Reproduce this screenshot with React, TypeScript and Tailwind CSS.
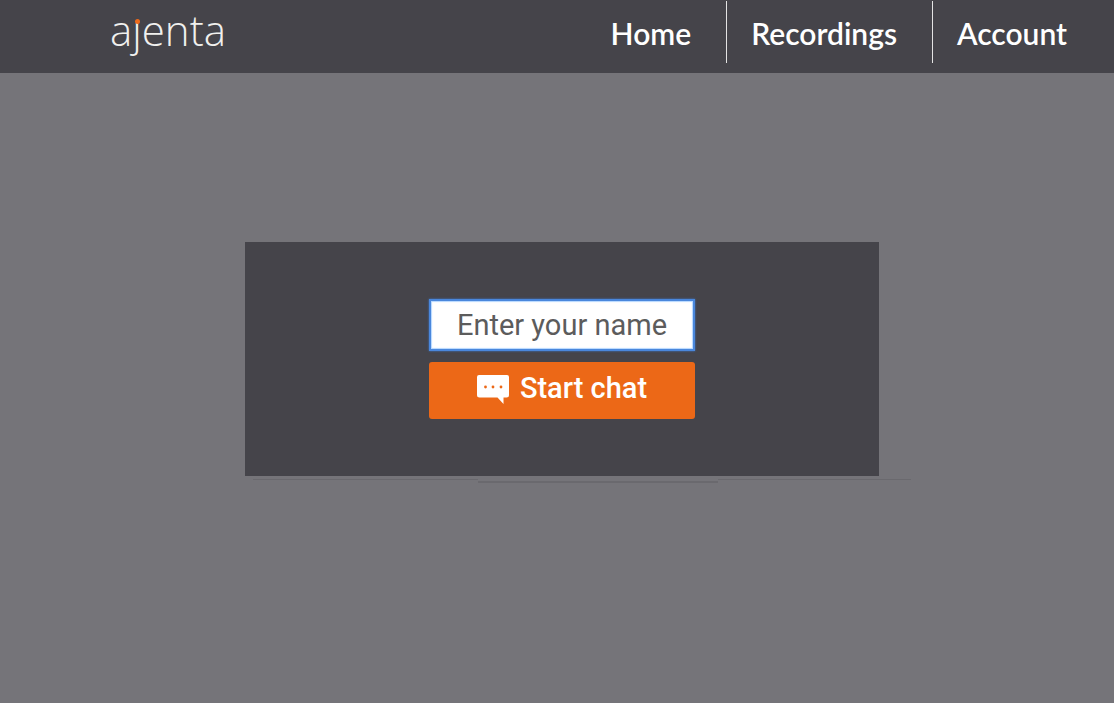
import React from "react";

const navItems = ["Home", "Recordings", "Account"];

function Logo() {
  return (
    <a
      href="#"
      aria-label="ajenta"
      className="ml-[110px] flex h-[60px] items-center font-['Open_Sans',sans-serif] text-[42px] font-light leading-none text-[#f0f0ee]"
    >
      <span>a</span>
      <span className="relative">
        ȷ
        <span className="absolute right-0.5 top-2.5 size-[5px] rounded-full bg-[#ee6a1b]" />
      </span>
      <span>enta</span>
    </a>
  );
}

function ChatIcon() {
  return (
    <svg viewBox="0 0 32 29" className="mt-px h-[29px] w-8" aria-hidden="true">
      <path
        fill="#fff"
        d="M2 0H30Q32 0 32 2V20Q32 22.500 29.500 22.500H26.500V29L20.500 22.500H2.500Q0 22.500 0 20V2Q0 0 2 0Z"
      />
      <g fill="#ec6817">
        <circle cx="8.500" cy="12" r="1.400" />
        <circle cx="16" cy="12" r="1.400" />
        <circle cx="24" cy="12" r="1.400" />
      </g>
    </svg>
  );
}

export default function App() {
  return (
    <div className="flex min-h-screen flex-col bg-[#757479]">
      <header className="flex h-[73px] items-start justify-between bg-[#45444a]">
        <Logo />
        <nav className="mr-3 flex pt-px">
          {navItems.map((item) => (
            <a
              key={item}
              href="#"
              className="flex h-[62px] items-center border-l border-[#e4e4e4] pl-6 pr-[35px] pt-0.5 font-['Lato','Carlito',sans-serif] text-[30px] font-semibold leading-none text-white first:border-l-0"
            >
              {item}
            </a>
          ))}
        </nav>
      </header>
      <main className="flex justify-center pl-[10px] pt-[169px]">
        <section className="relative w-full max-w-[634px] bg-[#45444a] py-[57px]">
          <form className="mx-auto flex w-[266px] flex-col gap-[11px]" onSubmit={(e) => e.preventDefault()}>
            <input
              type="text"
              aria-label="Enter your name"
              placeholder="Enter your name"
              className="h-[52px] w-full border-2 border-[#4a87dc] bg-white text-center font-['Roboto',sans-serif] text-[29px] text-[#5c5c5c] shadow-[0_0_2px_#3d78cc,inset_0_0_1px_1px_#b5d7ff] outline-none placeholder:text-[#5c5c5c]"
            />
            <button
              type="submit"
              className="flex h-[57px] w-full items-center justify-center gap-[11px] rounded-[3px] bg-[#ec6817] pb-1 font-['Roboto',sans-serif] text-[29px] font-medium leading-none text-white"
            >
              <ChatIcon />
              Start chat
            </button>
          </form>
          <div className="absolute left-2 -right-8 top-full mt-[3px] flex" aria-hidden="true">
            <span className="h-px w-[225px] bg-[#6a696e]" />
            <span className="mt-[2px] h-[2px] w-[240px] bg-[#6a696e]" />
            <span className="h-px flex-1 bg-[#6a696e]" />
          </div>
        </section>
      </main>
    </div>
  );
}
